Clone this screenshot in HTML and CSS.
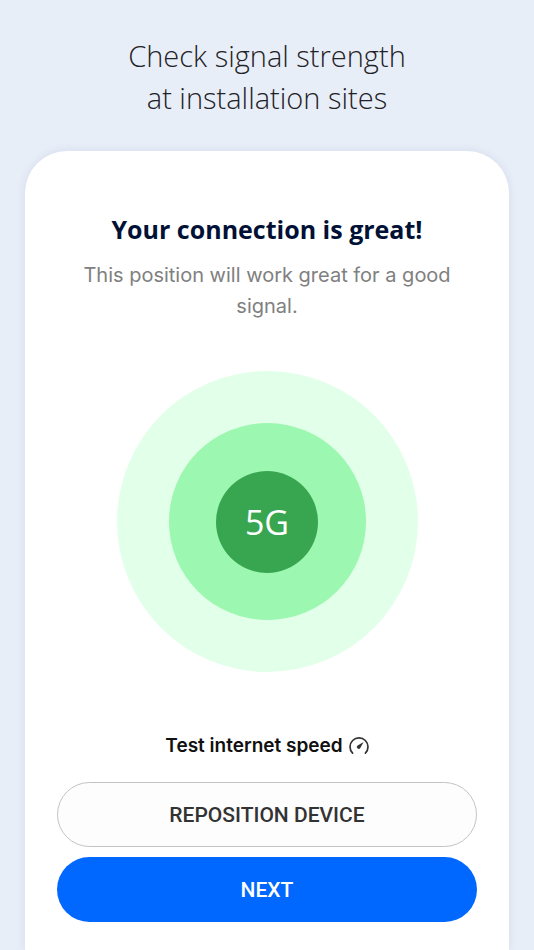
FILE: index.html
```
<!DOCTYPE html>
<html lang="en">
<head>
    <meta charset="UTF-8">
    <meta name="viewport" content="width=device-width, initial-scale=1">
    <title>Signal strength</title>
    <link rel="stylesheet" href="styles.css">
</head>
<body>
    <h1 class="page-title">Check signal strength<br>at installation sites</h1>

    <main class="card">
        <h2 class="card-title">Your connection is great!</h2>
        <p class="card-text">This position will work great for a good signal.</p>

        <!-- Signal rings -->
        <div class="ring ring-outer">
            <div class="ring ring-middle">
                <div class="ring ring-inner">5G</div>
            </div>
        </div>

        <a class="speed-link" href="#">
            Test internet speed
            <svg class="speed-icon" viewBox="0 0 20 20" aria-hidden="true">
                <path d="M3.6 17.2A9 9 0 1 1 16.4 17.2" fill="none" stroke="currentColor" stroke-width="1.7" stroke-linecap="round"/>
                <path d="M14.6 5.9L11.3 12A1.9 1.9 0 1 1 8.6 9.4Z" fill="currentColor"/>
            </svg>
        </a>

        <div class="actions">
            <button type="button" class="btn btn-outline">REPOSITION DEVICE</button>
            <button type="button" class="btn btn-primary">NEXT</button>
        </div>
    </main>
</body>
</html>
```
FILE: styles.css
```
* {
    box-sizing: border-box;
}

body {
    margin: 0;
    min-height: 100vh;
    display: flex;
    flex-direction: column;
    background-color: #e8eef8;
    font-family: Inter, sans-serif;
}

.page-title {
    margin: 0;
    padding: 35px 24px 32px;
    font-family: "Open Sans", sans-serif;
    font-size: 29px;
    font-weight: 300;
    line-height: 42px;
    text-align: center;
    color: #1f2226;
}

.card {
    flex: 1;
    display: flex;
    flex-direction: column;
    align-items: center;
    margin: 0 25px;
    padding: 60px 32px 28px;
    background-color: #fff;
    border-radius: 42px 42px 0 0;
    box-shadow: 0 0 8px rgba(60, 80, 130, 0.12);
}

.card-title {
    margin: 0;
    font-family: "Open Sans", sans-serif;
    font-size: 25px;
    font-weight: 700;
    line-height: 36px;
    text-align: center;
    color: #001135;
}

.card-text {
    margin: 13px 0 49px;
    font-size: 20px;
    line-height: 31px;
    text-align: center;
    color: #808080;
}

/* Rings */
.ring {
    display: flex;
    align-items: center;
    justify-content: center;
    border-radius: 50%;
}

.ring-outer {
    width: 301px;
    height: 301px;
    background-color: #e2ffe9;
}

.ring-middle {
    width: 197px;
    height: 197px;
    background-color: #9cf7b0;
}

.ring-inner {
    width: 102px;
    height: 102px;
    background-color: #38a650;
    color: #fff;
    font-family: "Open Sans", sans-serif;
    font-size: 34px;
}

.speed-link {
    display: flex;
    align-items: center;
    gap: 6px;
    margin: 62px 0 24px;
    font-size: 19px;
    font-weight: 600;
    line-height: 24px;
    color: #111;
    text-decoration: none;
}

.speed-icon {
    width: 20px;
    height: 20px;
    color: #333;
}

/* Buttons */
.actions {
    align-self: stretch;
    display: flex;
    flex-direction: column;
    gap: 10px;
}

.btn {
    height: 65px;
    border: 0;
    border-radius: 33px;
    font-family: Roboto, sans-serif;
    font-size: 21px;
    font-weight: 500;
    cursor: pointer;
}

.btn-outline {
    background-color: #fdfdfd;
    border: 1px solid #c4c4c4;
    color: #333;
}

.btn-primary {
    background-color: #0068ff;
    color: #fff;
}
```
